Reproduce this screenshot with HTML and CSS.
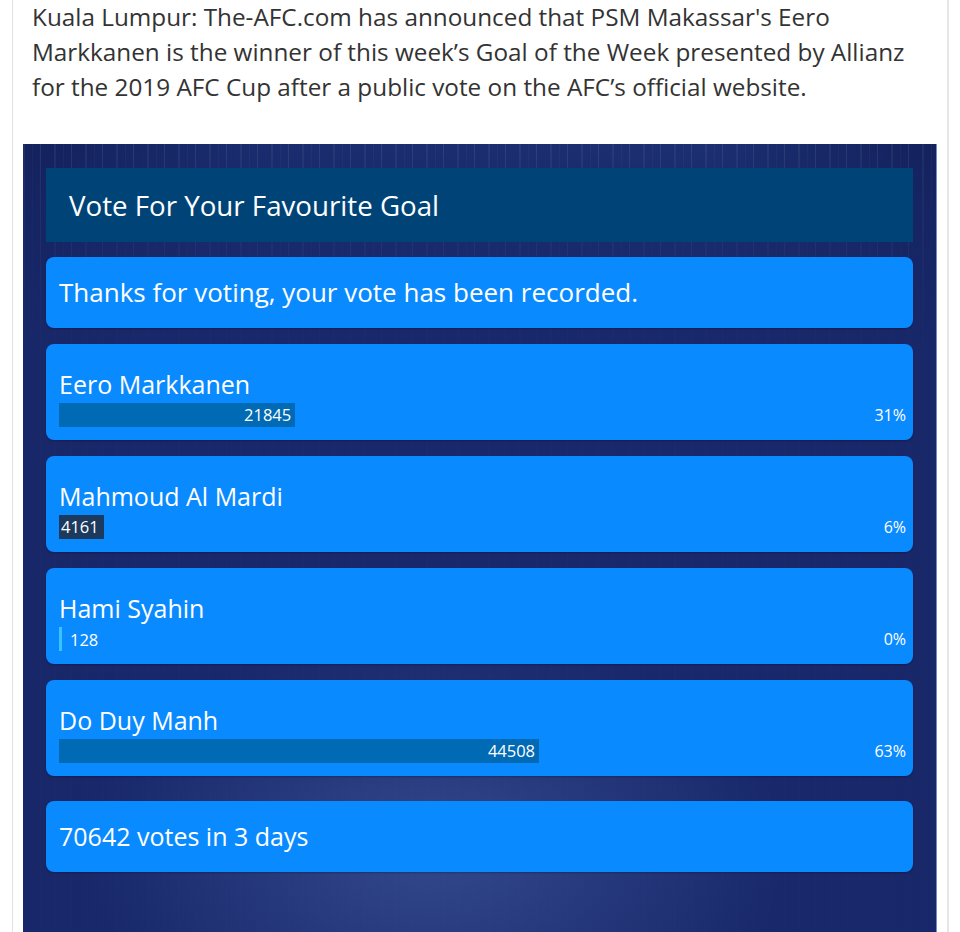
FILE: index.html
```html
<!DOCTYPE html>
<html lang="en">
<head>
    <meta charset="UTF-8">
    <meta name="viewport" content="width=device-width, initial-scale=1.0">
    <title>Goal of the Week</title>
    <link rel="stylesheet" href="styles.css">
</head>
<body>
    <div class="article">
        <p class="lead">Kuala Lumpur: The-AFC.com has announced that PSM Makassar's Eero Markkanen is the winner of this week’s Goal of the Week presented by Allianz for the 2019 AFC Cup after a public vote on the AFC’s official website.</p>

        <div class="poll">
            <div class="poll-title">Vote For Your Favourite Goal</div>

            <div class="poll-box poll-msg">Thanks for voting, your vote has been recorded.</div>

            <div class="poll-box poll-item">
                <div class="poll-name">Eero Markkanen</div>
                <div class="poll-row">
                    <div class="poll-track">
                        <div class="poll-bar" style="width: 31%">21845</div>
                    </div>
                    <div class="poll-pct">31%</div>
                </div>
            </div>

            <div class="poll-box poll-item">
                <div class="poll-name">Mahmoud Al Mardi</div>
                <div class="poll-row">
                    <div class="poll-track">
                        <div class="poll-bar mine" style="width: 5.9%">4161</div>
                    </div>
                    <div class="poll-pct">6%</div>
                </div>
            </div>

            <div class="poll-box poll-item">
                <div class="poll-name">Hami Syahin</div>
                <div class="poll-row">
                    <div class="poll-track">
                        <div class="poll-bar tiny"></div>
                        <span class="poll-count">128</span>
                    </div>
                    <div class="poll-pct">0%</div>
                </div>
            </div>

            <div class="poll-box poll-item last">
                <div class="poll-name">Do Duy Manh</div>
                <div class="poll-row">
                    <div class="poll-track">
                        <div class="poll-bar" style="width: 63%">44508</div>
                    </div>
                    <div class="poll-pct">63%</div>
                </div>
            </div>

            <div class="poll-box poll-total">70642 votes in 3 days</div>
        </div>
    </div>
</body>
</html>
```

FILE: styles.css
```css
body {
    margin: 0;
    padding: 0;
    background: #fff;
    font-family: 'Open Sans', 'Noto Sans', sans-serif;
    height: 932px;
    overflow: hidden;
}
.article {
    margin: 0 12px;
    padding: 0 10px;
    width: 914px;
    min-height: 932px;
    border-left: 1px solid #e2e2e2;
    border-right: 2px solid #e6e6e6;
}
.lead {
    margin: -1px 0 0;
    padding: 0 0 0 9px;
    font-size: 24.3px;
    line-height: 35px;
    color: #333;
}
.poll {
    margin-top: 40px;
    padding: 24px 23px 60px;
    min-height: 800px;
    border-right: 1px solid #6d8fc4;
    background:
        radial-gradient(ellipse 55% 35% at 45% 80%, rgba(90, 120, 190, 0.4), transparent 70%),
        linear-gradient(to bottom, rgba(24, 40, 106, 0) 0, rgba(24, 40, 106, 0.3) 30px, rgba(24, 40, 106, 0.92) 200px),
        repeating-linear-gradient(90deg, rgba(255, 255, 255, 0.06) 0 2px, transparent 2px 9px, rgba(255, 255, 255, 0.03) 9px 10px, transparent 10px 17px, rgba(255, 255, 255, 0.09) 17px 18px, transparent 18px 31px),
        linear-gradient(90deg, #13215c, #1a2c6e 25%, #1c2f71 75%, #13215c);
}
.poll-title {
    background: #004477;
    color: #fff;
    height: 74px;
    padding: 0 23px;
    font-size: 27.7px;
    line-height: 74px;
    margin-bottom: 15px;
}
.poll-box {
    background: #0a8aff;
    color: #fff;
    border-radius: 8px;
    box-shadow: 0 1px 2px rgba(0, 0, 0, 0.25);
    margin-bottom: 16px;
}
.poll-msg {
    height: 71px;
    line-height: 71px;
    padding: 0 13px;
    font-size: 26px;
}
.poll-item {
    height: 96px;
    box-sizing: border-box;
    padding: 22px 7px 0 13px;
}
.poll-item.last {
    margin-bottom: 25px;
}
.poll-name {
    font-size: 25px;
    line-height: 36px;
    margin-bottom: 1px;
}
.poll-row {
    display: flex;
    align-items: center;
    height: 24px;
}
.poll-track {
    width: 762px;
    display: flex;
    align-items: center;
    height: 24px;
}
.poll-bar {
    height: 24px;
    background: #006ab4;
    font-size: 16.5px;
    line-height: 24px;
    text-align: right;
    padding-right: 4px;
    box-sizing: border-box;
    white-space: nowrap;
}
.poll-bar.mine {
    background: #1b3a5e;
    padding: 0 2px;
    text-align: left;
}
.poll-bar.tiny {
    width: 3px;
    padding: 0;
    background: #3cc3ff;
}
.poll-count {
    font-size: 16.5px;
    margin-left: 8px;
}
.poll-pct {
    flex: 1;
    text-align: right;
    font-size: 16px;
    padding-top: 0;
}
.poll-total {
    height: 71px;
    line-height: 71px;
    padding: 0 13px;
    font-size: 25px;
}
```
